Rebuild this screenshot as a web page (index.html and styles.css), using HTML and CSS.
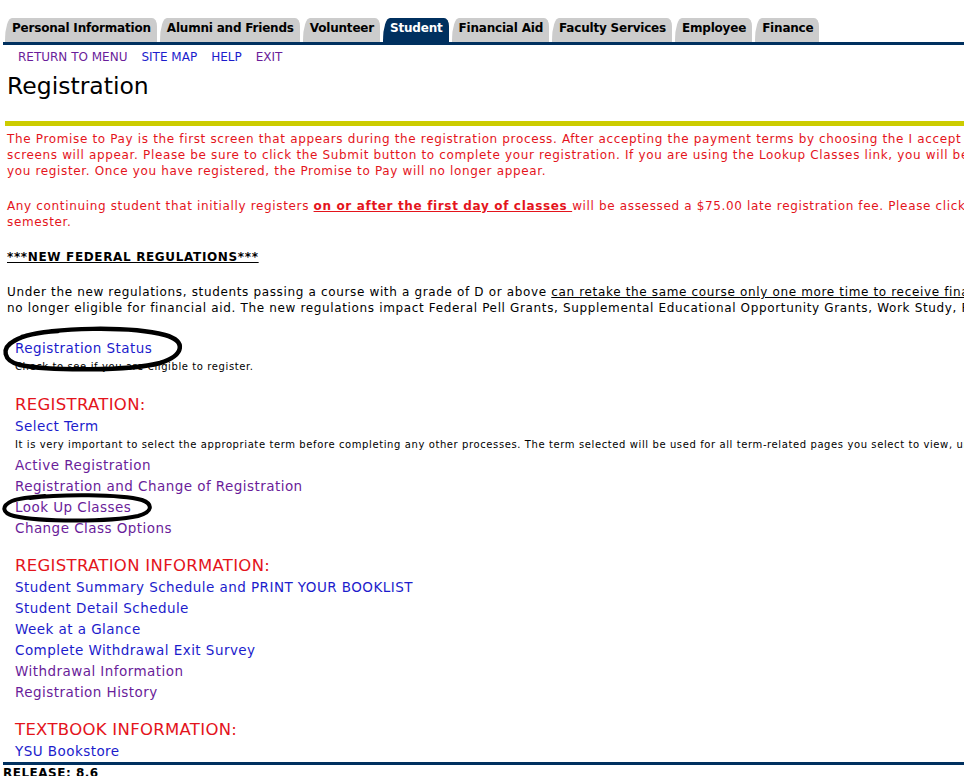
FILE: index.html
```html
<!DOCTYPE html>
<html lang="en">
<head>
  <meta charset="UTF-8">
  <title>Registration</title>
  <link rel="stylesheet" href="styles.css">
</head>
<body>
<div class="page">

  <div class="tabs">
    <a class="tab" href="#">Personal Information</a>
    <a class="tab" href="#">Alumni and Friends</a>
    <a class="tab" href="#">Volunteer</a>
    <a class="tab active" href="#">Student</a>
    <a class="tab" href="#">Financial Aid</a>
    <a class="tab" href="#">Faculty Services</a>
    <a class="tab" href="#">Employee</a>
    <a class="tab" href="#">Finance</a>
  </div>

  <div class="toplinks">
    <a class="visited" href="#">RETURN TO MENU</a>
    <a href="#">SITE MAP</a>
    <a href="#">HELP</a>
    <a class="visited" href="#">EXIT</a>
  </div>

  <h1>Registration</h1>
  <div class="rule"></div>

  <div class="info">
    <p class="warn">The Promise to Pay is the first screen that appears during the registration process. After accepting the payment terms by choosing the I accept button, the registration<br>
    screens will appear. Please be sure to click the Submit button to complete your registration. If you are using the Lookup Classes link, you will be asked to accept before<br>
    you register. Once you have registered, the Promise to Pay will no longer appear.</p>

    <p class="warn">Any continuing student that initially registers <b><u>on or after the first day of classes </u></b> will be assessed a $75.00 late registration fee. Please click <a class="visited" href="#">here</a> for the dates of the<br>
    semester.</p>

    <p><b><u>***NEW FEDERAL REGULATIONS***</u></b></p>

    <p>Under the new regulations, students passing a course with a grade of D or above <u>can retake the same course only one more time to receive financial aid</u>. After that, they are<br>
    no longer eligible for financial aid. The new regulations impact Federal Pell Grants, Supplemental Educational Opportunity Grants, Work Study, Perkins Loans and others.</p>
  </div>

  <div class="menu">
    <div class="item status">
      <a href="#">Registration Status</a>
      <div class="desc">Check to see if you are eligible to register.</div>
      <svg class="circle c1" width="186" height="52" viewBox="0 0 186 52">
        <path d="M22 13 C 55 3, 130 2, 165 11 C 186 17, 185 31, 160 39 C 130 47, 50 47, 20 41 C 3 37, 1 24, 14 17 C 24 11, 40 8, 58 7" fill="none" stroke="#000" stroke-width="4.5" stroke-linecap="round"/>
      </svg>
    </div>

    <h3>REGISTRATION:</h3>
    <div class="item">
      <a href="#">Select Term</a>
      <div class="desc">It is very important to select the appropriate term before completing any other processes. The term selected will be used for all term-related pages you select to view, until you change it.</div>
    </div>
    <div class="item"><a class="visited" href="#">Active Registration</a></div>
    <div class="item"><a class="visited" href="#">Registration and Change of Registration</a></div>
    <div class="item">
      <a class="visited" href="#">Look Up Classes</a>
      <svg class="circle c2" width="156" height="32" viewBox="0 0 156 32">
        <path d="M30 5 C 60 1, 120 1, 142 7 C 153 11, 153 19, 138 23 C 110 29, 40 29, 14 23 C 2 20, 1 13, 12 8 C 20 5, 30 4, 45 3" fill="none" stroke="#000" stroke-width="4" stroke-linecap="round"/>
      </svg>
    </div>
    <div class="item"><a class="visited" href="#">Change Class Options</a></div>

    <h3>REGISTRATION INFORMATION:</h3>
    <div class="item"><a href="#">Student Summary Schedule and PRINT YOUR BOOKLIST</a></div>
    <div class="item"><a href="#">Student Detail Schedule</a></div>
    <div class="item"><a href="#">Week at a Glance</a></div>
    <div class="item"><a href="#">Complete Withdrawal Exit Survey</a></div>
    <div class="item"><a class="visited" href="#">Withdrawal Information</a></div>
    <div class="item"><a class="visited" href="#">Registration History</a></div>

    <h3>TEXTBOOK INFORMATION:</h3>
    <div class="item"><a href="#">YSU Bookstore</a></div>
  </div>

  <div class="footer">RELEASE: 8.6</div>
</div>
</body>
</html>
```

FILE: styles.css
```css
html, body { overflow: hidden; }
body { margin: 0; font-family: "DejaVu Sans", Verdana, sans-serif; color: #000; background: #fff; }
.page { width: 1300px; padding: 0 0 0 3px; }

a { color: #1c1ccc; text-decoration: none; }
a.visited { color: #6a1d9a; }

/* tab bar */
.tabs {
  display: flex;
  gap: 3px;
  padding: 18px 0 0 2px;
  border-bottom: 3px solid #00305f;
}
.tab {
  display: block;
  height: 24px;
  line-height: 20px;
  padding: 0 6px 0 7px;
  background: #cccccc;
  color: #000;
  font-size: 12px;
  font-weight: bold;
  letter-spacing: -0.2px;
  border-top-left-radius: 7px 22px;
  border-top-right-radius: 5px 8px;
}
.tab.active { background: #00305f; color: #fff; }

.toplinks {
  display: flex;
  gap: 14px;
  padding: 4px 0 0 15px;
  font-size: 12px;
  line-height: 16px;
}

h1 {
  margin: 6px 0 0 4px;
  font-size: 23.5px;
  font-weight: normal;
  line-height: 30px;
}

.rule { height: 5px; background: #cccc00; margin: 20px 0 0 2px; }

.info { padding: 5px 0 0 4px; font-size: 12px; line-height: 16px; letter-spacing: 0.65px; }
.info p { margin: 0 0 19px; white-space: nowrap; }
.warn { color: #e4141c; }

/* menu list */
.menu { padding: 3px 0 0 12px; }
.item { position: relative; font-size: 13.5px; line-height: 21px; letter-spacing: 0.45px; }
.item.status { padding-bottom: 1px; }
.desc { font-size: 10px; line-height: 15px; letter-spacing: 0.6px; padding-bottom: 3px; color: #000; }
.menu h3 {
  margin: 16px 0 0;
  font-size: 16.5px;
  font-weight: normal;
  line-height: 22px;
  letter-spacing: 0.3px;
  color: #e4141c;
}

.circle { position: absolute; pointer-events: none; }
.c1 { left: -15px; top: -14px; }
.c2 { left: -15px; top: -4px; }

.footer {
  border-top: 3px solid #00305f;
  padding-top: 1px;
  font-size: 12px;
  font-weight: bold;
  letter-spacing: 0.5px;
}
```
